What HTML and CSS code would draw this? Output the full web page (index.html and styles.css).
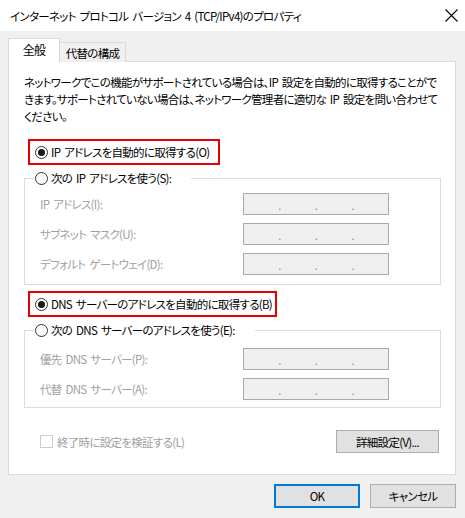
FILE: index.html
```html
<!DOCTYPE html>
<html lang="ja">
<head>
    <meta charset="UTF-8">
    <title>インターネット プロトコル バージョン 4 (TCP/IPv4)のプロパティ</title>
    <link rel="stylesheet" href="styles.css">
</head>
<body>
    <div class="window">
        <div class="titlebar">
            <span class="title">インターネット プロトコル バージョン 4 (TCP/IPv4)のプロパティ</span>
            <svg class="close" width="13" height="13" viewBox="0 0 13 13">
                <path d="M0.5 0.5 L12.5 12.5 M12.5 0.5 L0.5 12.5" stroke="#000" stroke-width="1.1" fill="none"/>
            </svg>
        </div>

        <div class="main">
            <div class="tabs">
                <div class="tab active">全般</div>
                <div class="tab">代替の構成</div>
            </div>

            <div class="panel">
                <p class="desc">ネットワークでこの機能がサポートされている場合は、IP 設定を自動的に取得することがで<br>きます。サポートされていない場合は、ネットワーク管理者に適切な IP 設定を問い合わせて<br>ください。</p>

                <!-- IP -->
                <div class="option marked ip-auto">
                    <span class="radio on"></span>
                    <span>IP アドレスを自動的に取得する(O)</span>
                </div>
                <fieldset class="group first">
                    <legend class="option">
                        <span class="radio"></span>
                        <span>次の IP アドレスを使う(S):</span>
                    </legend>
                    <div class="field">
                        <span class="label">IP アドレス(I):</span>
                        <span class="ipbox"><i>.</i><i>.</i><i>.</i></span>
                    </div>
                    <div class="field">
                        <span class="label">サブネット マスク(U):</span>
                        <span class="ipbox"><i>.</i><i>.</i><i>.</i></span>
                    </div>
                    <div class="field">
                        <span class="label">デフォルト ゲートウェイ(D):</span>
                        <span class="ipbox"><i>.</i><i>.</i><i>.</i></span>
                    </div>
                </fieldset>

                <!-- DNS -->
                <div class="option marked dns-auto">
                    <span class="radio on"></span>
                    <span>DNS サーバーのアドレスを自動的に取得する(B)</span>
                </div>
                <fieldset class="group second">
                    <legend class="option">
                        <span class="radio"></span>
                        <span>次の DNS サーバーのアドレスを使う(E):</span>
                    </legend>
                    <div class="field">
                        <span class="label">優先 DNS サーバー(P):</span>
                        <span class="ipbox"><i>.</i><i>.</i><i>.</i></span>
                    </div>
                    <div class="field">
                        <span class="label">代替 DNS サーバー(A):</span>
                        <span class="ipbox"><i>.</i><i>.</i><i>.</i></span>
                    </div>
                </fieldset>

                <div class="bottom-row">
                    <div class="check">
                        <span class="checkbox"></span>
                        <span>終了時に設定を検証する(L)</span>
                    </div>
                    <button class="btn detail">詳細設定(V)...</button>
                </div>
            </div>

            <div class="footer">
                <button class="btn ok">OK</button>
                <button class="btn">キャンセル</button>
            </div>
        </div>
    </div>
</body>
</html>
```

FILE: styles.css
```css
* {
    box-sizing: border-box;
}
body {
    margin: 0;
    font-family: "Noto Sans CJK JP", "Noto Sans", sans-serif;
    font-size: 11.5px;
    letter-spacing: -0.7px;
    word-spacing: 2px;
    font-feature-settings: "palt";
    color: #000;
}
.window {
    width: 465px;
    height: 518px;
    background: #f0f0f0;
    display: flex;
    flex-direction: column;
}
.titlebar {
    height: 31px;
    background: #fff;
    display: flex;
    align-items: center;
    justify-content: space-between;
    padding: 0 7px 0 10px;
}
.close {
    margin-top: -1px;
}
.main {
    padding: 7px 9px 0 8px;
}
.tabs {
    display: flex;
    align-items: flex-end;
    height: 24px;
    margin-bottom: -1px;
    position: relative;
}
.tab {
    height: 20px;
    width: 67px;
    margin-left: -1px;
    border: 1px solid #d9d9d9;
    border-bottom: none;
    background: #f0f0f0;
    display: flex;
    align-items: center;
    justify-content: center;
}
.tab.active {
    height: 24px;
    width: 52px;
    margin-left: 0;
    background: #fff;
    position: relative;
    z-index: 1;
    padding-bottom: 2px;
    font-size: 12px;
}
.panel {
    height: 414px;
    background: #fff;
    border: 1px solid #d9d9d9;
    padding: 12px 14px 0 15px;
}
.desc {
    margin: 0;
    line-height: 17px;
    white-space: nowrap;
}
.option {
    display: flex;
    align-items: center;
    gap: 3px;
    line-height: 17px;
    white-space: nowrap;
}
.marked {
    border: 2px solid #e60000;
    height: 26px;
    margin-left: 4px;
    padding-left: 5px;
}
.ip-auto {
    width: 192px;
    margin-top: 14px;
}
.dns-auto {
    width: 249px;
    margin-top: 6px;
}
.radio {
    width: 13px;
    height: 13px;
    border: 1px solid #333;
    border-radius: 50%;
    background: #fff;
    display: flex;
    align-items: center;
    justify-content: center;
    flex: none;
}
.radio.on::after {
    content: "";
    width: 7px;
    height: 7px;
    border-radius: 50%;
    background: #1a1a1a;
}
.group {
    margin: 5px 0 0 0;
    border: 1px solid #dcdcdc;
    padding: 0 0 9px 0;
    min-width: 0;
}
.group legend {
    margin-left: 9px;
    padding: 0 20px 0 1px;
}
.group.second {
    padding-bottom: 7px;
}
.group.first .field:first-of-type {
    margin-top: 6px;
}
.group.second .field:first-of-type {
    margin-top: 9px;
}
.field {
    display: flex;
    align-items: center;
    padding-left: 15px;
    margin-top: 8px;
    white-space: nowrap;
}
.label {
    width: 203px;
    color: #a0a0a0;
}
.ipbox {
    width: 146px;
    height: 22px;
    border: 1px solid #a9a9a9;
    background: #f0f0f0;
    display: flex;
    justify-content: space-evenly;
    align-items: center;
    color: #8a8a8a;
    font-size: 11px;
}
.ipbox i {
    font-style: normal;
    padding-top: 2px;
}
.bottom-row {
    display: flex;
    align-items: center;
    justify-content: space-between;
    margin-top: 22px;
    padding: 0 2px 0 16px;
}
.check {
    display: flex;
    align-items: center;
    gap: 4px;
    color: #a0a0a0;
}
.checkbox {
    width: 13px;
    height: 13px;
    border: 1px solid #cccccc;
    background: #fff;
}
.btn {
    font-family: inherit;
    font-size: 11.5px;
    letter-spacing: -0.7px;
    word-spacing: 2px;
    font-feature-settings: "palt";
    color: #000;
    height: 23px;
    background: #e1e1e1;
    border: 1px solid #adadad;
    padding: 0;
}
.detail {
    width: 103px;
}
.footer {
    display: flex;
    justify-content: flex-end;
    gap: 10px;
    margin-top: 9px;
}
.footer .btn {
    width: 86px;
    height: 24px;
}
.btn.ok {
    border: 2px solid #0078d7;
}
```
